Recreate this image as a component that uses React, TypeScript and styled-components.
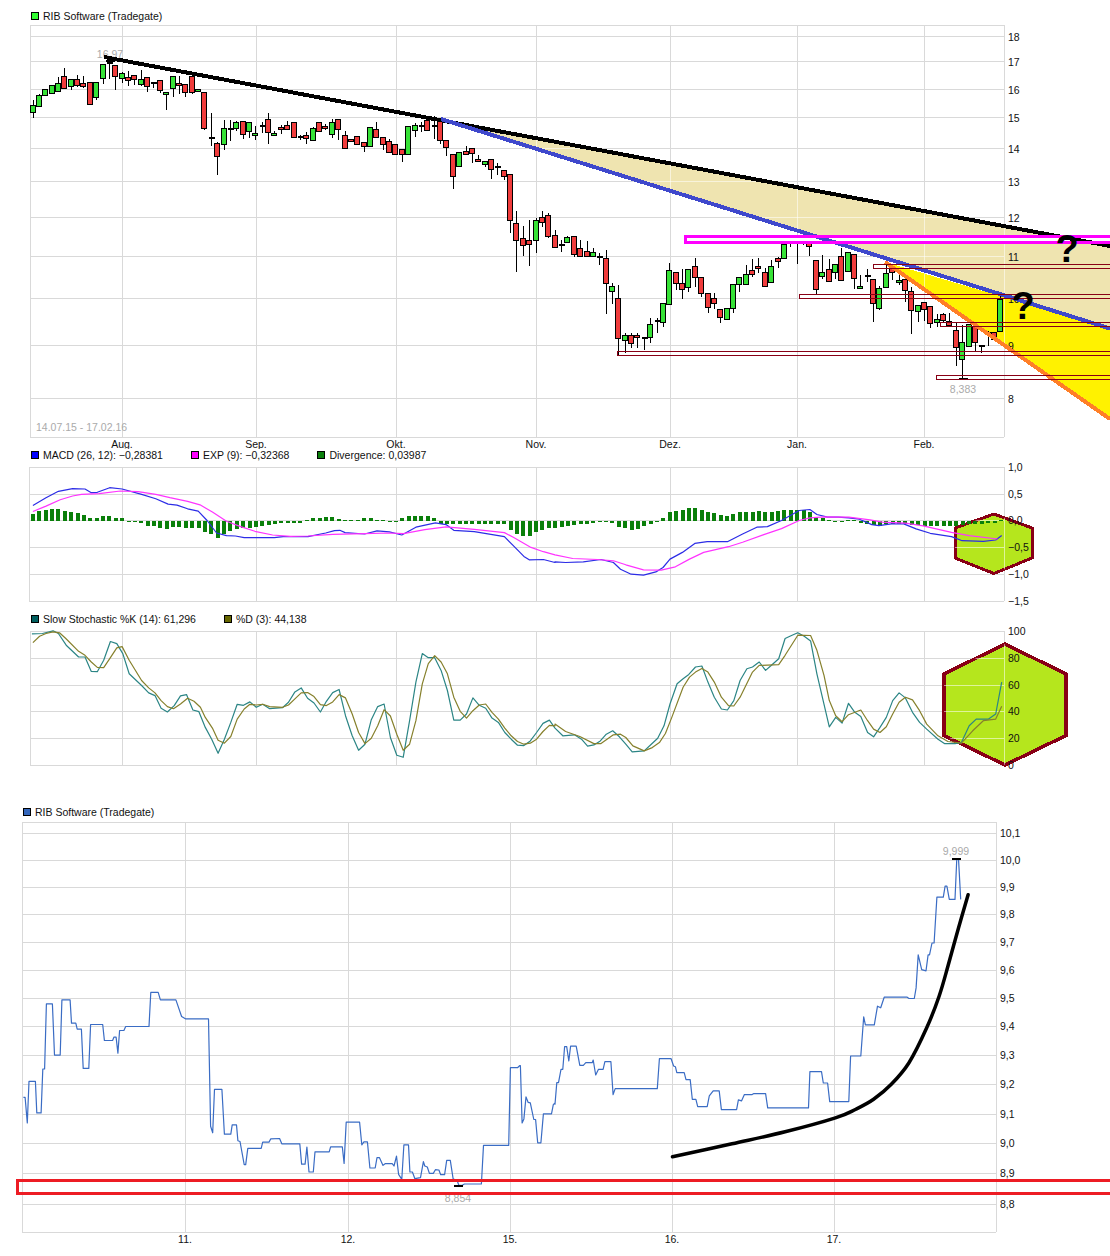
import React from "react";
import styled, { createGlobalStyle } from "styled-components";

const GlobalStyle = createGlobalStyle`
  html, body { margin: 0; padding: 0; background: #fff; }
  body { font-family: "Liberation Sans", Arial, sans-serif; overflow: hidden; }
`;

const Page = styled.div`
  width: 1110px;
  height: 1256px;
  padding-top: 10px;
  box-sizing: border-box;
  overflow: hidden;
`;
const Panel = styled.section<{ $gap?: number }>`
  margin-top: ${(p) => p.$gap ?? 0}px;
`;
const Legend = styled.div<{ $inset: number }>`
  display: flex;
  align-items: center;
  gap: 28px;
  height: 12px;
  padding-left: ${(p) => p.$inset}px;
  font-size: 10.5px;
  line-height: 12px;
  color: #111;
  white-space: nowrap;
`;
const LegendItem = styled.span`
  display: inline-flex;
  align-items: center;
  gap: 4px;
`;
const Swatch = styled.i<{ $color: string }>`
  display: block;
  width: 8px;
  height: 8px;
  box-sizing: border-box;
  background: ${(p) => p.$color};
  border: 1px solid #000;
`;
const Chart = styled.svg`
  display: block;
  width: 1110px;
`;
const GridLine = styled.line`
  stroke: #d9d9d9;
  stroke-width: 1;
  shape-rendering: crispEdges;
`;
const PaleLine = styled.line`
  stroke: #fff;
  stroke-opacity: 0.55;
  stroke-width: 1;
  shape-rendering: crispEdges;
`;
const AxisText = styled.text`
  font-family: "Liberation Sans", Arial, sans-serif;
  font-size: 10.5px;
  fill: #111;
`;
const MutedText = styled.text`
  font-family: "Liberation Sans", Arial, sans-serif;
  font-size: 10.5px;
  fill: #aaa;
`;
const Question = styled.text`
  font-family: "Liberation Sans", Arial, sans-serif;
  font-size: 38px;
  font-weight: 700;
  fill: #000;
  text-anchor: middle;
`;
const Wick = styled.line`
  stroke: #000;
  stroke-width: 1;
  shape-rendering: crispEdges;
`;
const Doji = styled.line`
  stroke: #000;
  stroke-width: 2;
  shape-rendering: crispEdges;
`;
const Body = styled.rect<{ $up: boolean }>`
  fill: ${(p) => (p.$up ? "#37e237" : "#f03c3c")};
  stroke: #000;
  stroke-width: 1;
  shape-rendering: crispEdges;
`;
const Series = styled.polyline<{ $color: string; $w?: number }>`
  fill: none;
  stroke: ${(p) => p.$color};
  stroke-width: ${(p) => p.$w ?? 1.2};
  stroke-linejoin: round;
`;
const Stroke = styled.line<{ $color: string; $w?: number }>`
  stroke: ${(p) => p.$color};
  stroke-width: ${(p) => p.$w ?? 4};
  shape-rendering: crispEdges;
`;
const Area = styled.polygon<{ $color: string }>`
  fill: ${(p) => p.$color};
  shape-rendering: crispEdges;
`;
const Hexagon = styled.polygon<{ $w: number }>`
  fill: #b5e61d;
  stroke: #880015;
  stroke-width: ${(p) => p.$w};
  stroke-linejoin: miter;
  shape-rendering: crispEdges;
`;
const BandFill = styled.rect`
  fill: #fff;
`;
const Band = styled.rect`
  fill: none;
  stroke: #ff00ff;
  stroke-width: 3;
  shape-rendering: crispEdges;
`;
const SupportBox = styled.rect`
  fill: none;
  stroke: #880015;
  stroke-width: 1;
  shape-rendering: crispEdges;
`;
const FloorBox = styled.rect`
  fill: none;
  stroke: #ed1c24;
  stroke-width: 3;
  shape-rendering: crispEdges;
`;
const DivBar = styled.rect`
  fill: #0a7f0a;
  shape-rendering: crispEdges;
`;
const Curve = styled.path`
  fill: none;
  stroke: #000;
  stroke-width: 3.5;
  stroke-linecap: round;
`;

type C = [number, number, number, number, "g" | "r" | "d"];
const candles: C[] = [
  [100,118,104.5,111.5,"g"],[94,105,94.5,105,"g"],[89,96,89,95,"g"],[85,93,85,93,"g"],[77,91,83,91,"g"],
  [68,88,76,88,"r"],[79,90,79,86,"g"],[75,87,79,85,"r"],[76,88,83,86,"r"],[82,104,82,104,"r"],
  [82,100,82,97,"g"],[64,84,64,78,"g"],[61,79,63,63,"d"],[65,90,65,76,"r"],[72,83,73,78,"g"],
  [71,86,77,80,"r"],[75,85,75,79,"r"],[70,86,79,84,"g"],[77,92,77,86,"r"],[83,88,83,83,"d"],
  [80,93,80,90,"r"],[92,110,92,94,"g"],[76,97,76,88,"g"],[76,94,83,85,"r"],[84,97,84,92,"r"],
  [76,94,76,92,"r"],[89,92,89,91,"g"],[92,130,92,128,"r"],[113,146,138,138,"d"],[142,175,143,156,"r"],
  [120,150,128,144,"g"],[120,141,129,129,"d"],[121,131,122,128,"g"],[121,139,121,134,"r"],[122,138,122,131,"g"],
  [126,140,133,135,"g"],[122,133,126,126,"d"],[113,144,119,132,"r"],[131,136,133,135,"g"],[125,134,127,129,"r"],
  [121,130,125,129,"r"],[122,137,122,137,"r"],[135,140,137,137,"d"],[132,144,135,138,"r"],[127,140,128,140,"g"],
  [122,131,122,131,"r"],[124,130,126,128,"r"],[119,138,122,134,"g"],[119,140,119,129,"r"],[131,148,135,148,"r"],
  [139,141,139,141,"r"],[136,144,136,144,"r"],[142,152,142,146,"r"],[127,146,127,146,"g"],[122,137,129,137,"r"],
  [137,150,137,144,"r"],[139,152,141,152,"r"],[144,154,144,154,"r"],[149,162,149,154,"r"],[126,154,126,154,"g"],
  [123,137,125,130,"g"],[122,132,126,126,"d"],[118,130,120,130,"r"],[116,139,126,126,"d"],[121,144,121,140,"r"],
  [140,156,140,147,"r"],[154,189,154,176,"r"],[152,166,152,166,"g"],[146,154,151,154,"r"],[148,163,148,153,"r"],
  [155,161,159,161,"r"],[161,167,161,164,"g"],[159,179,159,169,"r"],[163,175,167,167,"d"],[170,180,170,176,"r"],
  [174,233,174,220,"r"],[211,272,223,240,"r"],[226,256,238,245,"r"],[220,266,240,244,"r"],[218,253,220,240,"g"],
  [211,227,217,222,"r"],[213,238,215,236,"r"],[230,247,235,247,"r"],[240,252,245,245,"d"],[236,242,237,242,"g"],
  [236,257,236,254,"r"],[240,256,248,256,"r"],[241,256,251,256,"r"],[248,256,252,256,"g"],[253,265,257,257,"d"],
  [250,314,258,283,"r"],[283,304,286,291,"g"],[285,355,298,338,"r"],[333,353,335,340,"g"],[333,348,335,343,"r"],
  [333,348,335,337,"r"],[337,350,338,338,"d"],[318,343,324,337,"g"],[318,333,321,321,"d"],[303,327,303,322,"g"],
  [263,304,270,304,"g"],[272,290,272,283,"r"],[269,299,283,289,"r"],[269,292,269,287,"g"],[258,287,266,277,"r"],
  [277,297,277,293,"r"],[293,313,293,307,"r"],[293,309,298,303,"r"],[309,323,309,317,"r"],[308,319,308,319,"g"],
  [284,313,284,308,"g"],[277,292,277,284,"g"],[265,284,274,284,"g"],[259,277,270,274,"r"],[258,273,266,268,"r"],
  [268,286,272,286,"r"],[260,282,266,282,"g"],[257,268,258,261,"r"],[244,258,244,258,"g"],[240,247,242,242,"d"],
  [236,264,238,242,"g"],[240,245,242,242,"d"],[238,256,238,246,"r"],[260,295,260,289,"r"],[255,279,272,276,"g"],
  [259,281,269,281,"r"],[264,279,264,272,"g"],[248,280,256,280,"r"],[252,271,252,271,"g"],[254,289,254,278,"r"],
  [275,288,286,288,"g"],[269,282,276,276,"d"],[279,322,279,303,"r"],[286,310,288,308,"g"],[265,287,273,287,"g"],
  [267,280,267,272,"r"],[273,285,280,282,"g"],[279,302,279,290,"r"],[287,334,291,310,"r"],[305,322,305,311,"g"],
  [302,321,302,309,"r"],[306,328,306,323,"r"],[314,327,319,322,"g"],[313,322,314,320,"r"],[313,327,321,325,"r"],
  [323,366,330,347,"r"],[325,378,342,359,"g"],[324,346,324,346,"g"],[326,351,326,342,"r"],[345,353,346,346,"d"],
  [331,346,332,334,"g"],[332,341,332,339,"r"],[296,331,299,331,"g"],
];

const div: number[] = [
  22,30,33,36,36,30,28,24,18,8,8,15,14,10,8,-1,-3,-6,-14,-15,-22,-24,-18,-18,-20,-20,-20,-32,-40,-52,-40,-30,-24,-20,-22,
  -18,-14,-12,-8,-6,-5,-5,-5,4,8,8,13,13,5,4,2,2,9,8,4,2,-2,-4,8,14,16,16,14,8,-8,-8,-8,-8,-8,-10,-8,-8,-8,-9,-10,-26,-38,-44,-44,-34,-26,-20,
  -22,-18,-14,-12,-10,-8,-6,-3,-4,-6,-18,-22,-26,-24,-16,-8,-4,10,26,30,34,38,38,34,26,24,18,16,22,26,28,28,30,26,28,30,32,34,34,34,28,12,8,2,1,1,2,3,-6,-8,-12,-16,-8,-8,-8,-10,-12,-13,-14,-14,-14,-14,-14,-14,-12,-10,-10,-8,-6,-5,3,
];

const pts = (s: string, ox: number, oy: number, sx: number, sy: number) =>
  s
    .trim()
    .split(";")
    .map((p) => p.trim())
    .filter(Boolean)
    .map((p) => {
      const [x, y] = p.split(",").map(Number);
      return `${(ox + x / sx).toFixed(1)},${(oy + y / sy).toFixed(1)}`;
    })
    .join(" ");

const macdLine =
  pts("93,195;130,172;165,153;205,145;240,146;258,157;275,156;310,142;345,146;400,162;440,175;475,191;500,194;530,205;560,212;585,240;612,277;640,285;665,286;690,291;725,291;775,291;800,288;870,288;920,277;945,270;960,269;975,276;1030,280;1065,271;1100,274;1135,283;1175,260;1230,247;1260,252;1282,269;1340,273;1425,288;1450,315;1480,347;1495,357;1535,356;1568,365", 0, 440, 2.825, 2.98) +
  " " +
  pts("0,363;30,365;80,363;130,356;165,365;185,385;215,400;250,403;285,393;305,380;325,355;360,335;395,308;430,303;487,303;530,280;570,260;600,258;640,240;690,210;720,207;740,222;770,230;800,230;830,232;860,236;895,252;915,255;950,250;985,250;1020,265;1060,278;1120,288;1150,300;1210,302;1245,298;1262,285", 555, 440, 2.825, 2.98);
const expLine =
  pts("93,213;130,197;170,178;205,167;230,162;280,160;340,152;390,154;440,162;480,172;530,183;565,193;600,215;640,242;680,258;720,272;770,283;820,287;870,286;940,281;1030,279;1100,277;1140,279;1200,267;1260,259;1340,266;1425,276;1450,290;1500,320;1535,333;1568,342", 0, 440, 2.825, 2.98) +
  " " +
  pts("0,342;50,353;120,356;165,360;200,372;250,387;300,388;340,378;380,355;420,335;490,318;530,305;590,282;640,264;690,240;720,232;760,229;830,230;890,238;925,245;990,248;1040,256;1120,275;1170,285;1250,295", 555, 440, 2.825, 2.98);
const kLine =
  pts("90,71;120,70;150,62;165,70;187,105;222,140;240,140;258,183;275,184;293,150;312,94;330,100;347,130;365,190;400,225;420,247;438,255;455,293;473,304;492,285;510,256;527,252;545,298;562,303;580,350;598,385;616,427;634,385;652,335;670,281;688,284;706,274;724,290;742,281;762,294;798,291;815,275;833,244;851,232;869,263;887,277;905,304;922,272;940,246;958,237;976,315;995,375;1013,418;1031,400;1049,327;1067,288;1085,280;1103,380;1121,433;1139,439;1157,330;1175,215;1193,130;1210,142;1228,142;1246,180;1264,240;1282,328;1300,328;1318,310;1336,262;1354,284;1372,293;1390,322;1408,335;1426,365;1444,385;1462,403;1480,404;1498,390;1516,365;1534,338;1552,328;1568,352", 0, 610, 2.825, 2.98) +
  " " +
  pts("0,352;22,375;55,372;75,385;92,406;110,402;128,390;145,370;163,360;182,378;200,400;218,423;252,420;272,400;290,382;308,345;325,280;345,220;362,205;378,192;397,170;415,167;432,215;450,260;470,295;487,298;505,270;523,210;542,175;558,170;577,155;595,180;613,163;632,145;650,85;668,76;686,68;704,78;722,92;740,190;775,348;793,320;811,337;829,278;847,305;864,317;883,365;900,378;918,350;936,320;954,270;972,247;990,262;1010,305;1030,335;1050,355;1082,385;1100,398;1130,398;1148,395;1170,345;1190,325;1225,325;1245,310;1262,215", 555, 610, 2.825, 2.98);
const dLine =
  pts("93,97;112,78;130,70;150,65;168,68;186,85;222,123;240,135;258,155;275,171;293,172;312,142;330,113;345,109;365,150;400,210;420,232;438,247;455,270;473,288;490,294;510,280;530,263;548,272;566,290;580,320;600,352;616,388;634,397;652,377;670,325;690,295;706,281;724,283;742,281;762,288;798,290;815,283;833,265;851,247;869,246;887,258;905,282;922,285;940,274;958,252;976,262;995,310;1013,365;1031,398;1049,382;1067,345;1085,297;1103,316;1121,370;1139,418;1157,400;1175,330;1193,220;1210,160;1228,136;1246,155;1264,190;1282,260;1300,302;1318,322;1336,300;1354,283;1372,280;1390,305;1408,325;1426,352;1444,375;1462,392;1480,400;1498,397;1516,385;1534,362;1552,344;1568,345", 0, 610, 2.825, 2.98) +
  " " +
  pts("0,340;30,362;70,377;110,398;130,398;165,372;185,370;200,380;220,405;252,420;275,410;295,395;312,368;330,320;362,230;380,200;397,185;415,174;432,185;450,215;470,260;490,285;505,286;523,260;558,185;577,165;632,163;650,135;686,75;722,76;740,120;760,195;775,270;793,315;811,333;829,312;864,298;883,330;900,355;918,365;936,348;954,310;972,275;990,260;1010,268;1030,300;1050,340;1082,375;1110,392;1148,397;1180,360;1210,330;1245,325;1262,287", 555, 610, 2.825, 2.98);
const tickLine =
  pts("66,353;71,353;77,430;82,305;100,305;104,400;116,400;121,268;126,268;131,72;148,72;154,226;170,226;175,60;198,60;202,130;214,130;218,148;230,148;235,266;251,266;256,134;290,134;295,182;318,182;322,172;328,172;333,220;338,152;350,152;355,140;421,140;426,37;447,37;453,60;497,60;513,110;525,117;589,117;595,440;601,460;606,329;627,329;634,464;652,464;656,436;668,436;672,484;678,486;690,556;694,556;700,507;738,507;742,488;760,488;765,478;790,477;796,493;847,493;852,554;862,554;867,503;873,578;885,578;890,517;930,517;934,502;967,502;972,552;978,428;1016,428;1022,496;1028,487;1038,487;1045,566;1060,566;1065,535;1072,535;1082,558;1088,553;1108,553;1113,560;1120,530;1126,585;1135,600;1141,496;1154,496;1158,578;1165,578;1172,598;1188,595;1196,547;1200,560;1207,563;1213,582;1224,582;1230,571;1240,572;1245,586;1256,586;1262,543;1272,543;1280,598;1292,605;1296,618;1306,618;1312,614;1360,614;1366,498;1437,498;1442,264;1462,264;1468,258;1470,258;1475,430;1480,418;1486,352;1492,368;1498,370;1508,420;1513,420;1519,490;1528,490;1535,403;1558,403;1563,375;1568,370", 0, 980, 2.825, 3.01) +
  " " +
  pts("0,915;5,850;10,850;17,810;22,810;27,742;33,742;39,785;44,740;60,740;70,798;80,798;87,790;105,790;108,782;115,827;123,810;136,810;141,787;158,787;164,886;170,868;289,868;295,778;328,778;335,800;340,802;344,820;365,820;370,841;382,841;388,900;398,900;403,922;430,922;436,890;447,875;464,875;470,931;513,931;518,902;527,905;535,886;557,886;562,883;595,883;601,926;716,926;720,817;753,817;758,851;770,851;776,907;830,907;835,770;864,770;872,652;877,676;902,676;911,620;920,625;930,593;995,593;1000,597;1015,597;1020,565;1026,466;1036,510;1048,514;1054,466;1058,466;1065,430;1071,430;1079,292;1097,292;1102,259;1107,259;1114,299;1130,299;1135,176;1140,176;1146,299", 555, 800, 2.825, 3.0075);

const catmull = (s: string) => {
  const p = s.split(" ").map((q) => q.split(",").map(Number));
  let d = `M${p[0][0]} ${p[0][1]}`;
  for (let i = 0; i < p.length - 1; i++) {
    const a = p[Math.max(0, i - 1)];
    const b = p[i];
    const c = p[i + 1];
    const e = p[Math.min(p.length - 1, i + 2)];
    const c1x = b[0] + (c[0] - a[0]) / 6;
    const c1y = b[1] + (c[1] - a[1]) / 6;
    const c2x = c[0] - (e[0] - b[0]) / 6;
    const c2y = c[1] - (e[1] - b[1]) / 6;
    d += ` C${c1x.toFixed(1)} ${c1y.toFixed(1)} ${c2x.toFixed(1)} ${c2y.toFixed(1)} ${c[0]} ${c[1]}`;
  }
  return d;
};
const trend = catmull(
  pts("332,1073;500,1034;650,998;792,956;850,930;900,900;950,855;1000,790;1050,685;1085,590;1110,500;1140,385;1167,285", 555, 800, 2.825, 3.0075),
);

const months: [number, string][] = [[122,"Aug."],[256,"Sep."],[396,"Okt."],[536,"Nov."],[670,"Dez."],[797,"Jan."],[924,"Feb."]];
const priceTicks: [number, string][] = [[36,"18"],[61,"17"],[89,"16"],[117,"15"],[148,"14"],[181,"13"],[217,"12"],[256,"11"],[298,"10"],[345,"9"],[398,"8"]];
const macdTicks: [number, string][] = [[467,"1,0"],[494,"0,5"],[520,"0,0"],[547,"−0,5"],[574,"−1,0"],[601,"−1,5"]];
const stochTicks: [number, string][] = [[631,"100"],[658,"80"],[685,"60"],[711,"40"],[738,"20"],[765,"0"]];
const tickTicks: [number, string][] = [[833,"10,1"],[860,"10,0"],[887,"9,9"],[914,"9,8"],[942,"9,7"],[970,"9,6"],[998,"9,5"],[1026,"9,4"],[1055,"9,3"],[1084,"9,2"],[1114,"9,1"],[1143,"9,0"],[1173,"8,9"],[1204,"8,8"]];
const days: [number, string][] = [[185,"11."],[348,"12."],[510,"15."],[672,"16."],[834,"17."]];

const px = (v: number) => Math.round(v) + 0.5;

const Frame: React.FC<{ left: number; right: number; top: number; bottom: number; rows: number[]; cols: number[] }> = ({ left, right, top, bottom, rows, cols }) => (
  <g>
    {rows.map((y) => (
      <GridLine key={`r${y}`} x1={left} x2={right} y1={px(y)} y2={px(y)} />
    ))}
    {cols.map((x) => (
      <GridLine key={`c${x}`} x1={px(x)} x2={px(x)} y1={top} y2={bottom} />
    ))}
    <GridLine x1={px(left)} x2={px(left)} y1={top} y2={bottom} />
    <GridLine x1={px(right)} x2={px(right)} y1={top} y2={bottom} />
    <GridLine x1={left} x2={right} y1={px(top)} y2={px(top)} />
    <GridLine x1={left} x2={right} y1={px(bottom)} y2={px(bottom)} />
  </g>
);

const Pale: React.FC<{ left: number; right: number; top: number; bottom: number; rows: number[]; cols: number[]; clip: string }> = ({ left, right, top, bottom, rows, cols, clip }) => (
  <g clipPath={`url(#${clip})`}>
    {rows.map((y) => (
      <PaleLine key={`r${y}`} x1={left} x2={right} y1={px(y)} y2={px(y)} />
    ))}
    {cols.map((x) => (
      <PaleLine key={`c${x}`} x1={px(x)} x2={px(x)} y1={top} y2={bottom} />
    ))}
    <PaleLine x1={px(right)} x2={px(right)} y1={top} y2={bottom} />
  </g>
);

const Ticks: React.FC<{ items: [number, string][]; x: number; dy?: number }> = ({ items, x, dy = 5 }) => (
  <g>
    {items.map(([y, t]) => (
      <AxisText key={t} x={x} y={y + dy}>
        {t}
      </AxisText>
    ))}
  </g>
);

const XLabels: React.FC<{ items: [number, string][]; y: number }> = ({ items, y }) => (
  <g>
    {items.map(([x, t]) => (
      <AxisText key={t} x={x} y={y} textAnchor="middle">
        {t}
      </AxisText>
    ))}
  </g>
);

const cols = months.map((m) => m[0]);
const tan = "441,120 1110,246 1110,328.5";
const yellow = "885,262 1110,328.5 1110,419";
const macdHex = "994,514 1032,528 1032,558 994,573.5 955,558 955,528";
const stochHex = "1005,644 1066,674 1066,735.5 1005,765 944,735.5 944,674";

export default function App() {
  return (
    <Page>
      <GlobalStyle />
      <Panel>
        <Legend $inset={31}>
          <LegendItem>
            <Swatch $color="#33ff33" />
            RIB Software (Tradegate)
          </LegendItem>
        </Legend>
        <Chart viewBox="0 22 1110 427" height={427}>
          <defs>
            <clipPath id="zones">
              <polygon points={tan} />
              <polygon points={yellow} />
            </clipPath>
          </defs>
          <Frame left={30} right={1004} top={25} bottom={437} rows={priceTicks.map((t) => t[0])} cols={cols} />
          <XLabels items={months} y={448} />
          <Area points={tan} $color="#efe4b0" />
          <Area points={yellow} $color="#fff200" />
          <Pale left={30} right={1004} top={25} bottom={437} rows={priceTicks.map((t) => t[0])} cols={cols} clip="zones" />
          <Ticks items={priceTicks} x={1008} />
          <MutedText x={36} y={431}>14.07.15 - 17.02.16</MutedText>
          <MutedText x={110} y={58} textAnchor="middle">16,97</MutedText>
          <MutedText x={963} y={393} textAnchor="middle">8,383</MutedText>
          <Doji x1={106} x2={115} y1={60.5} y2={60.5} />
          <Doji x1={959} x2={968} y1={378.5} y2={378.5} />
          {candles.map(([wt, wb, bt, bb, k], i) => {
            const x = Math.round(33 + i * 6.368 - 0.5) + 0.5;
            return (
              <g key={i}>
                <Wick x1={x} x2={x} y1={wt} y2={wb} />
                {k === "d" ? (
                  <Doji x1={x - 3} x2={x + 3} y1={bt} y2={bt} />
                ) : (
                  <Body x={x - 3} y={px(bt)} width={5} height={Math.max(1, Math.round(bb - bt))} $up={k === "g"} />
                )}
              </g>
            );
          })}
          <BandFill x={685} y={236.5} width={425} height={6} />
          <Stroke x1={104} y1={57} x2={1110} y2={246} $color="#000" />
          <Stroke x1={441} y1={119} x2={1110} y2={328.5} $color="#3f48cc" />
          <Stroke x1={885} y1={262} x2={1110} y2={419} $color="#ff7f27" />
          <Band x={685.5} y={236.5} width={440} height={6} />
          <SupportBox x={873.5} y={264.5} width={260} height={4} />
          <SupportBox x={799.5} y={294.5} width={330} height={4} />
          <SupportBox x={940.5} y={322.5} width={190} height={4} />
          <SupportBox x={617.5} y={351.5} width={520} height={4} />
          <SupportBox x={936.5} y={375.5} width={190} height={4} />
          <Question x={1067} y={262}>?</Question>
          <Question x={1023} y={319}>?</Question>
        </Chart>
      </Panel>

      <Panel>
        <Legend $inset={31}>
          <LegendItem>
            <Swatch $color="#0000ff" />
            MACD (26, 12): −0,28381
          </LegendItem>
          <LegendItem>
            <Swatch $color="#ff00ff" />
            EXP (9): −0,32368
          </LegendItem>
          <LegendItem>
            <Swatch $color="#0a7f0a" />
            Divergence: 0,03987
          </LegendItem>
        </Legend>
        <Chart viewBox="0 461 1110 146" height={146}>
          <defs>
            <clipPath id="macdHex">
              <polygon points={macdHex} />
            </clipPath>
          </defs>
          <Frame left={29} right={1004} top={467} bottom={601} rows={macdTicks.map((t) => t[0])} cols={cols} />
          <Hexagon points={macdHex} $w={3} />
          <Pale left={29} right={1004} top={467} bottom={601} rows={macdTicks.map((t) => t[0])} cols={cols} clip="macdHex" />
          {div.map((v, i) => {
            const h = Math.abs(v) / 2.98;
            return (
              <DivBar
                key={i}
                x={Math.round(31 + i * 6.368)}
                y={v > 0 ? 521 - h : 521}
                width={4}
                height={Math.max(1, Math.round(h))}
              />
            );
          })}
          <Series points={macdLine} $color="#2c2ce6" />
          <Series points={expLine} $color="#ff33ff" />
          <Ticks items={macdTicks} x={1008} dy={4} />
        </Chart>
      </Panel>

      <Panel $gap={6}>
        <Legend $inset={31}>
          <LegendItem>
            <Swatch $color="#005f5f" />
            Slow Stochastic %K (14): 61,296
          </LegendItem>
          <LegendItem>
            <Swatch $color="#666600" />
            %D (3): 44,138
          </LegendItem>
        </Legend>
        <Chart viewBox="0 625 1110 147" height={147}>
          <defs>
            <clipPath id="stochHex">
              <polygon points={stochHex} />
            </clipPath>
          </defs>
          <Frame left={30} right={1004} top={631} bottom={765} rows={stochTicks.map((t) => t[0])} cols={cols} />
          <Hexagon points={stochHex} $w={3.5} />
          <Pale left={30} right={1004} top={631} bottom={765} rows={stochTicks.map((t) => t[0])} cols={cols} clip="stochHex" />
          <Series points={kLine} $color="#2b8585" />
          <Series points={dLine} $color="#86802c" />
          <Ticks items={stochTicks} x={1008} dy={4} />
        </Chart>
      </Panel>

      <Panel $gap={34}>
        <Legend $inset={23}>
          <LegendItem>
            <Swatch $color="#3366bb" />
            RIB Software (Tradegate)
          </LegendItem>
        </Legend>
        <Chart viewBox="0 818 1110 438" height={438}>
          <Frame left={22} right={996} top={822} bottom={1232} rows={tickTicks.map((t) => t[0])} cols={days.map((d) => d[0])} />
          <Ticks items={tickTicks} x={1000} dy={4} />
          <XLabels items={days} y={1243} />
          <Series points={tickLine} $color="#3a6cc4" $w={1.2} />
          <Doji x1={454} x2={463} y1={1186} y2={1186} />
          <Doji x1={952} x2={961} y1={858.5} y2={858.5} />
          <MutedText x={458} y={1202} textAnchor="middle">8,854</MutedText>
          <MutedText x={956} y={855} textAnchor="middle">9,999</MutedText>
          <Curve d={trend} />
          <FloorBox x={17.5} y={1180} width={1120} height={13} />
        </Chart>
      </Panel>
    </Page>
  );
}
